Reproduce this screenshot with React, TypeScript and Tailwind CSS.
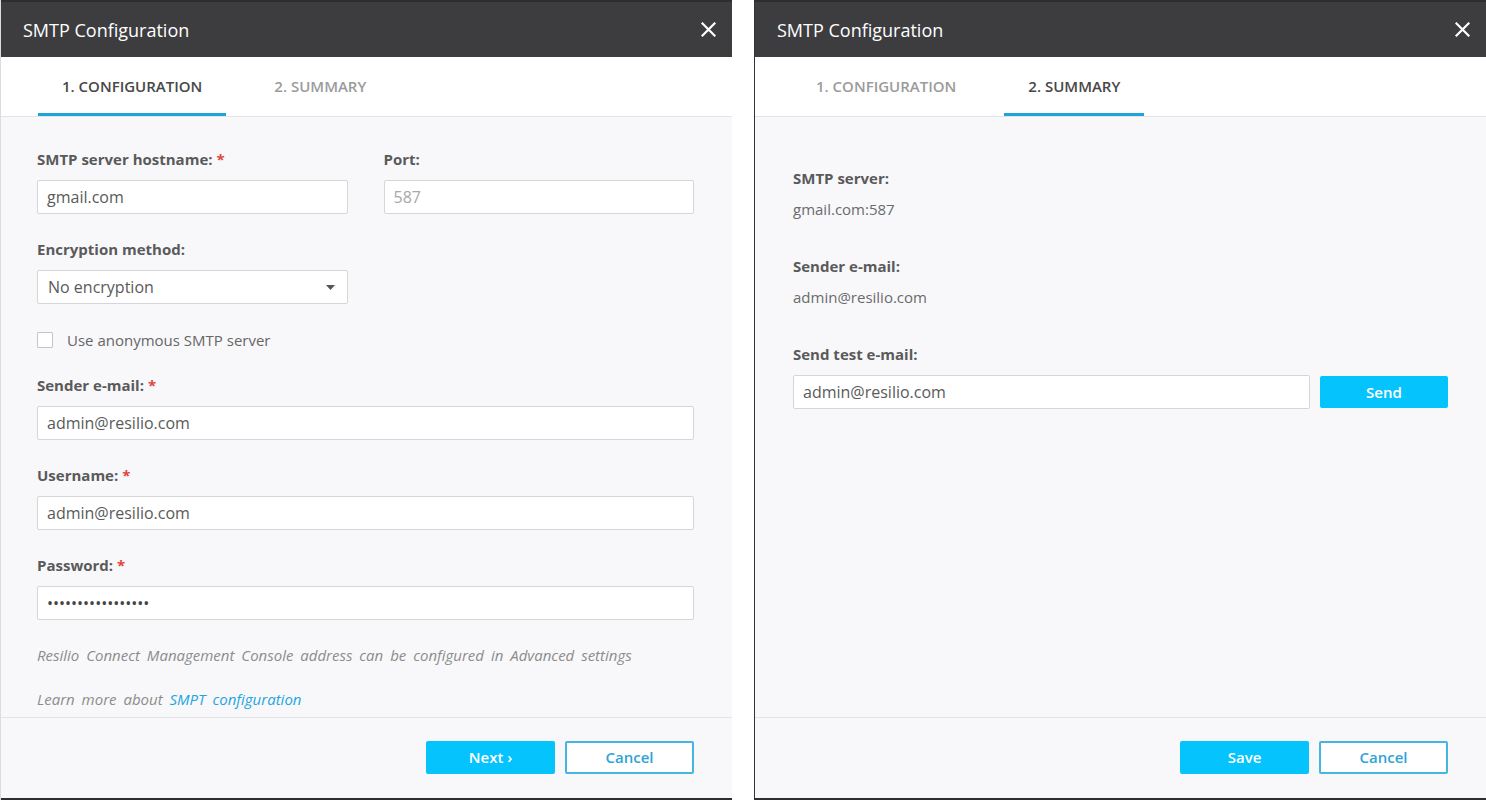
import React from "react";

const font = { fontFamily: '"Open Sans", "Noto Sans", Arial, sans-serif' };

function CloseIcon() {
  return (
    <svg width="15" height="15" viewBox="0 0 15 15" className="block">
      <path d="M1.5 1.5 L13.5 13.5 M13.5 1.5 L1.5 13.5" stroke="#ffffff" strokeWidth="2.2" strokeLinecap="square" />
    </svg>
  );
}

function Header() {
  return (
    <div className="h-[55px] bg-[#3d3d40] flex items-center justify-between pl-[22px] pr-[16px] shrink-0">
      <span className="text-white text-[18px] leading-none">SMTP Configuration</span>
      <CloseIcon />
    </div>
  );
}

function Tabs({ active }: { active: 1 | 2 }) {
  const tab = (n: 1 | 2, text: string) => (
    <div
      className={
        "h-full px-6 pt-[3px] flex items-center text-[15px] font-semibold border-b-[3px] " +
        (active === n ? "text-[#474747] border-[#1ea4d8]" : "text-[#9b9b9b] border-transparent")
      }
    >
      {text}
    </div>
  );
  return (
    <div className="h-[60px] bg-white border-b border-[#e4e4e6] flex items-end pl-[37px] shrink-0">
      <div className="h-[59px] flex gap-6">
        {tab(1, "1. CONFIGURATION")}
        {tab(2, "2. SUMMARY")}
      </div>
    </div>
  );
}

function Label({ text, required }: { text: string; required?: boolean }) {
  return (
    <div className="text-[15px] leading-5 font-bold text-[#5a5a5a] mb-[11px]">
      {text}
      {required && <span className="text-[#e0463c] ml-1">*</span>}
    </div>
  );
}

function Field({ value, muted, password }: { value: string; muted?: boolean; password?: boolean }) {
  return (
    <div className="h-[34px] bg-white border border-[#d6d6d8] rounded-[2px] flex items-center px-[9px]">
      <span className={"text-[16px] " + (muted ? "text-[#a8a8a8]" : password ? "text-[#444444]" : "text-[#5a5a5a]")}>
        {value}
      </span>
    </div>
  );
}

function Footer({ primary }: { primary: string }) {
  return (
    <div className="h-[81px] border-t border-[#e4e4e6] bg-[#f8f8fa] flex items-center justify-end gap-[10px] pr-[38px] pb-[1px] shrink-0">
      <button className="w-[129px] h-[33px] rounded-[2px] bg-[#05c3fd] text-white text-[15px] font-semibold">
        {primary}
      </button>
      <button className="w-[129px] h-[33px] rounded-[2px] bg-white border-2 border-solid border-[color:#45b6e0] text-[#2ea4d4] text-[15px] font-semibold">
        Cancel
      </button>
    </div>
  );
}

function ConfigDialog() {
  return (
    <div className="w-[732px] h-[800px] flex flex-col shrink-0 border-l border-[#dcdcde]">
      <div className="h-[2px] bg-[#2e2e30] shrink-0" />
      <Header />
      <Tabs active={1} />
      <div className="flex-1 bg-[#f8f8fa] pl-[36px] pr-[38px] pt-[32px] overflow-hidden">
        <div className="grid grid-cols-2 gap-x-[36px]">
          <div>
            <Label text="SMTP server hostname:" required />
            <Field value="gmail.com" />
          </div>
          <div>
            <Label text="Port:" />
            <Field value="587" muted />
          </div>
        </div>

        <div className="grid grid-cols-2 gap-x-[36px] mt-[25px]">
          <div>
            <Label text="Encryption method:" />
            <div className="h-[34px] bg-white border border-[#d6d6d8] rounded-[2px] flex items-center justify-between px-[10px]">
              <span className="text-[16px] text-[#5a5a5a]">No encryption</span>
              <svg width="9" height="5" viewBox="0 0 9 5" className="mr-[2px]">
                <path d="M0 0 L9 0 L4.5 5 Z" fill="#555555" />
              </svg>
            </div>
          </div>
        </div>

        <div className="flex items-center gap-[14px] mt-[26px] h-5">
          <div className="w-[16px] h-[16px] bg-white border border-[#c4c4c6] rounded-[1px]" />
          <span className="text-[15px] text-[#666666]">Use anonymous SMTP server</span>
        </div>

        <div className="mt-[25px]">
          <Label text="Sender e-mail:" required />
          <Field value="admin@resilio.com" />
        </div>
        <div className="mt-[25px]">
          <Label text="Username:" required />
          <Field value="admin@resilio.com" />
        </div>
        <div className="mt-[25px]">
          <Label text="Password:" required />
          <Field value="•••••••••••••••••" password />
        </div>

        <p className="mt-[25px] text-[15px] leading-5 italic text-[#8c8c8c] [word-spacing:3px]">
          Resilio Connect Management Console address can be configured in Advanced settings
        </p>
        <p className="mt-[24px] text-[15px] leading-5 italic text-[#8c8c8c] [word-spacing:3px]">
          Learn more about <span className="text-[#1fa6dc]">SMPT configuration</span>
        </p>
      </div>
      <Footer primary="Next ›" />
      <div className="h-[2px] bg-[#2e2e30] shrink-0" />
    </div>
  );
}

function SummaryItem({ label, value }: { label: string; value: string }) {
  return (
    <div className="mb-[37px]">
      <div className="text-[15px] leading-5 font-bold text-[#5a5a5a] mb-[11px]">{label}</div>
      <div className="text-[15px] leading-5 text-[#6b6b6b]">{value}</div>
    </div>
  );
}

function SummaryDialog() {
  return (
    <div className="w-[732px] h-[800px] flex flex-col shrink-0 border-l border-[#333335]">
      <div className="h-[2px] bg-[#2e2e30] shrink-0" />
      <Header />
      <Tabs active={2} />
      <div className="flex-1 bg-[#f8f8fa] pl-[38px] pr-[38px] pt-[51px] overflow-hidden">
        <SummaryItem label="SMTP server:" value="gmail.com:587" />
        <SummaryItem label="Sender e-mail:" value="admin@resilio.com" />
        <div className="text-[15px] leading-5 font-bold text-[#5a5a5a] mb-[11px]">Send test e-mail:</div>
        <div className="flex items-center gap-[10px]">
          <div className="flex-1">
            <Field value="admin@resilio.com" />
          </div>
          <button className="w-[128px] h-[32px] rounded-[2px] bg-[#05c3fd] text-white text-[15px] font-semibold">
            Send
          </button>
        </div>
      </div>
      <Footer primary="Save" />
      <div className="h-[2px] bg-[#2e2e30] shrink-0" />
    </div>
  );
}

export default function App() {
  return (
    <div className="w-[1486px] h-[800px] bg-white flex gap-[22px] overflow-hidden" style={font}>
      <ConfigDialog />
      <SummaryDialog />
    </div>
  );
}
